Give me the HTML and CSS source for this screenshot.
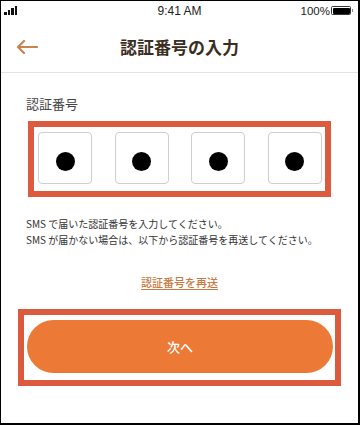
FILE: index.html
```html
<!DOCTYPE html>
<html lang="ja">
<head>
<meta charset="utf-8">
<link rel="stylesheet" href="styles.css">
</head>
<body>
<div class="frame">
  <div class="status">
    <div class="signal"><span class="b1"></span><span class="b2"></span><span class="b3"></span><span class="b4"></span></div>
    <div class="time">9:41 AM</div>
    <div class="batt"><span class="pct">100%</span><span class="cell"><span class="fill"></span></span><span class="nub"></span></div>
  </div>
  <div class="header">
    <svg class="back" width="22" height="14" viewBox="0 0 22 14"><path d="M21 7H2M8 1L2 7l6 6" fill="none" stroke="#c8834f" stroke-width="2.2" stroke-linecap="round" stroke-linejoin="round"/></svg>
    <div class="title">認証番号の入力</div>
  </div>
  <div class="content">
    <div class="label">認証番号</div>
    <div class="hl code">
      <div class="digit"><span class="dot"></span></div>
      <div class="digit"><span class="dot"></span></div>
      <div class="digit"><span class="dot"></span></div>
      <div class="digit"><span class="dot"></span></div>
    </div>
    <div class="note">
      <p>SMS で届いた認証番号を入力してください。</p>
      <p>SMS が届かない場合は、以下から認証番号を再送してください。</p>
    </div>
    <div class="resend"><a class="link">認証番号を再送</a></div>
    <div class="hl btnwrap">
      <div class="btn">次へ</div>
    </div>
  </div>
</div>
</body>
</html>
```
FILE: styles.css
```css
html, body { margin: 0; padding: 0; background: #fff; }
body { font-family: "Noto Sans CJK JP", "Noto Sans", sans-serif; }
.frame {
  width: 360px; height: 425px; box-sizing: border-box;
  border: 1px solid #000; border-right-width: 2px; border-bottom-width: 2px;
  overflow: hidden;
}
.status {
  height: 19px; display: flex; align-items: center; justify-content: space-between;
  position: relative; padding: 0 5px 0 3px;
  font-family: "Liberation Sans", Arial, sans-serif; font-size: 12px; color: #222;
}
.signal { display: flex; align-items: flex-end; gap: 1px; height: 9px; margin-top: -1px; }
.signal span { width: 2.5px; background: #111; display: block; }
.signal .b1 { height: 3px; } .signal .b2 { height: 5px; } .signal .b3 { height: 7px; } .signal .b4 { height: 9px; }
.time { position: absolute; left: 0; right: 0; text-align: center; top: 3px; }
.batt { display: flex; align-items: center; }
.pct { font-size: 11.5px; margin-right: 1px; }
.cell { width: 17px; height: 6px; border: 1px solid #333; border-radius: 1.5px; padding: 0.5px; display: flex; }
.fill { flex: 1; background: #000; border-radius: 1px; }
.nub { width: 1.5px; height: 3px; background: #888; margin-left: 0.5px; }
.header {
  height: 52px; border-bottom: 1px solid #e2e2e2; position: relative;
  display: flex; align-items: center; justify-content: center;
}
.back { position: absolute; left: 15px; top: 20px; }
.title { font-size: 17px; font-weight: bold; color: #3a2d22; letter-spacing: 0; }
.content { display: flex; flex-direction: column; }
.label { margin: 22px 0 0 25px; font-size: 13px; line-height: 18px; color: #444; }
.hl { border: 6px solid #dc5a3d; box-sizing: border-box; }
.code {
  margin: 8px 0 0 27px; width: 303px; height: 76px;
  display: flex; justify-content: space-between; padding: 5px 3px 0 4px;
}
.digit {
  width: 54px; height: 52px; box-sizing: border-box; border: 1px solid #cfcfcf; border-radius: 4px;
  display: flex; justify-content: center; align-items: center; padding-top: 6px;
}
.dot { width: 19px; height: 19px; border-radius: 50%; background: #000; display: block; }
.note { margin: 19px 0 0 25px; font-size: 10px; line-height: 16px; color: #333; }
.note p { margin: 0; }
.resend { margin-top: 24px; text-align: center; line-height: 16px; }
.link { font-size: 11px; color: #c87942; font-weight: 500; text-decoration: underline; text-underline-offset: 2px; }
.btnwrap {
  margin: 19px 0 0 17px; width: 323px; height: 77px; padding: 5px 2px 0 3px;
}
.btn {
  height: 53px; border-radius: 27px; background: #ec7935; color: #fff;
  display: flex; align-items: center; justify-content: center;
  font-size: 13px; font-weight: 500;
}
```
